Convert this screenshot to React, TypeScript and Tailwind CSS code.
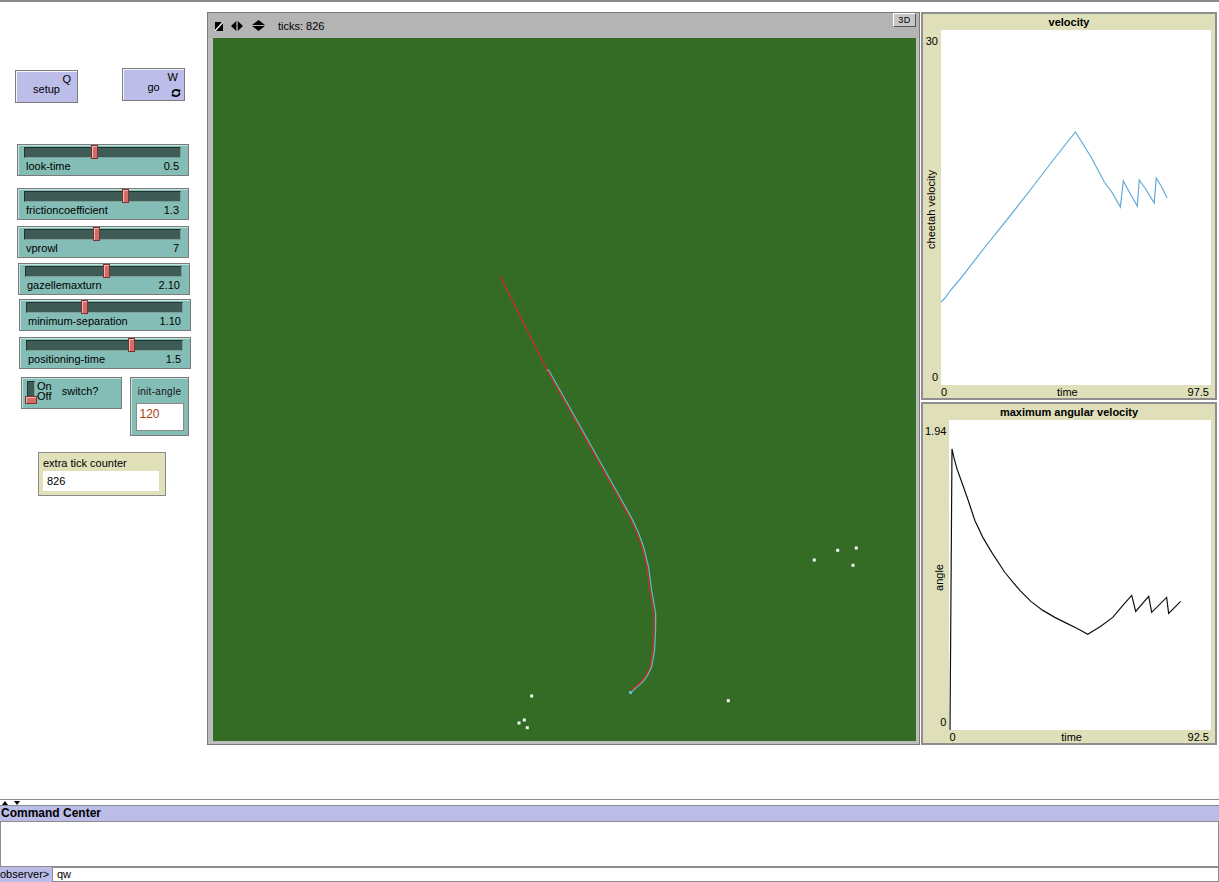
import React from "react";

type SliderDef = {
  name: string;
  value: string;
  thumb: number;
  className: string;
};

const sliders: SliderDef[] = [
  { name: "look-time", value: "0.5", thumb: 66, className: "ml-[17px] mt-[41px]" },
  { name: "frictioncoefficient", value: "1.3", thumb: 97, className: "ml-[17px] mt-[12px]" },
  { name: "vprowl", value: "7", thumb: 68, className: "ml-[17px] mt-[6px]" },
  { name: "gazellemaxturn", value: "2.10", thumb: 77, className: "ml-[18px] mt-[5px]" },
  { name: "minimum-separation", value: "1.10", thumb: 54, className: "ml-[19px] mt-[4px]" },
  { name: "positioning-time", value: "1.5", thumb: 101, className: "ml-[19px] mt-[6px]" },
];

// trail of the cheetah (red) and the gazelle (cyan), in world pixels
const trail: [number, number][] = [
  [334, 332], [384, 421], [407, 462], [417, 480], [424, 495], [429, 509], [434, 529],
  [437, 552], [441, 575], [441, 592], [440, 612], [437, 629], [432, 639], [427, 645],
  [421, 650], [417, 654],
];

const gazelles: [number, number][] = [
  [318.7, 658], [311.3, 682], [306, 685], [314.3, 689.7], [515.3, 662.7],
  [601.3, 522], [624.7, 512.3], [643.3, 510], [640, 527.3],
];

const velocityPts = "0,272 4,268 9,261 20,248 45,216 70,185 95,153 115,127 135,102 150,126 164,152 172,163 180,177 183,151 189,162 197,176 199,150 206,160 214,173 216,148 221,156 227,168";
const anglePts = "1,313 3,29 5,38 8,49 13,63 19,80 26,101 34,118 43,133 56,153 71,171 82,182 94,191 106,198 118,204 128,209 139,215 152,207 164,198 175,185 183,176 187,192 200,177 203,193 218,178 220,194 232,182";

function NlButton({ label, hotkey, forever, className }: { label: string; hotkey: string; forever?: boolean; className: string }) {
  return (
    <div className={`relative flex h-[33px] w-[63px] items-center justify-center border border-[#7c7c7c] bg-[#bdbde9] text-[11px] leading-[13px] shadow-[inset_1px_1px_0_#f4f4ff] ${forever ? "pt-[6px]" : "pt-[5px]"} ${className}`}>
      <span>{label}</span>
      <span className="absolute right-[6px] top-[2px]">{hotkey}</span>
      {forever && (
        <svg className="absolute bottom-[3px] right-[3px]" width="10" height="8" viewBox="0 0 10 8">
          <path d="M1.6 4 A3.2 3 0 0 1 7.6 2.4" stroke="#000" strokeWidth="1.7" fill="none" />
          <path d="M6 0.4 L9.6 0.8 L8.6 4 Z" fill="#000" />
          <path d="M8.4 4 A3.2 3 0 0 1 2.4 5.6" stroke="#000" strokeWidth="1.7" fill="none" />
          <path d="M4 7.6 L0.4 7.2 L1.4 4 Z" fill="#000" />
        </svg>
      )}
    </div>
  );
}

function Slider({ name, value, thumb, className }: SliderDef) {
  return (
    <div className={`flex h-[32px] w-[172px] flex-col border border-[#7a7a7a] bg-[#84bdb5] pl-[6px] pr-[7px] pt-[2px] shadow-[inset_1px_1px_0_#bfe3dd] ${className}`}>
      <div className="relative h-[11px] border border-b-[#7fa19b] border-l-[#22332f] border-r-[#7fa19b] border-t-[#22332f] bg-[#3f5b56]">
        <div
          className="absolute top-[-3px] h-[14px] w-[7px] border border-[#7a3232] bg-[#d26d69] shadow-[inset_1px_1px_0_#f3b5b0]"
          style={{ left: thumb }}
        />
      </div>
      <div className="mt-[2px] flex justify-between px-[2px] text-[11px] leading-[13px]">
        <span>{name}</span>
        <span>{value}</span>
      </div>
    </div>
  );
}

function LeftPanel() {
  return (
    <div className="flex w-[207px] shrink-0 flex-col items-start">
      <div className="flex items-start pl-[15px] pt-[66px]">
        <NlButton label="setup" hotkey="Q" className="mt-[2px]" />
        <NlButton label="go" hotkey="W" forever className="ml-[44px]" />
      </div>
      {sliders.map((s) => (
        <Slider key={s.name} {...s} />
      ))}
      <div className="ml-[21px] mt-[8px] flex items-start">
        <div className="flex h-[32px] w-[101px] items-start border border-[#7a7a7a] bg-[#84bdb5] pl-[5px] pt-[3px] shadow-[inset_1px_1px_0_#bfe3dd]">
          <div className="relative h-[22px] w-[8px] border border-b-[#7fa19b] border-l-[#22332f] border-r-[#7fa19b] border-t-[#22332f] bg-[#3f5b56]">
            <div className="absolute bottom-[-2px] left-[-3px] h-[8px] w-[12px] border border-[#7a3232] bg-[#d26d69] shadow-[inset_1px_1px_0_#f3b5b0]" />
          </div>
          <div className="ml-[2px] flex flex-col text-[11px] leading-[10px]">
            <span>On</span>
            <span>Off</span>
          </div>
          <span className="ml-[10px] mt-[4px] text-[11px] leading-[13px]">switch?</span>
        </div>
        <div className="ml-[8px] flex h-[59px] w-[59px] flex-col items-center border border-[#7a7a7a] bg-[#84bdb5] pt-[8px] shadow-[inset_1px_1px_0_#bfe3dd]">
          <span className="text-[10px] leading-[12px] tracking-[0.3px] text-[#111]">init-angle</span>
          <div className="mt-[5px] h-[28px] w-[48px] border border-[#8a8a8a] bg-white pl-[3px] pt-[3px] text-[12px] leading-[14px] text-[#a5420e]">120</div>
        </div>
      </div>
      <div className="ml-[38px] mt-[16px] flex h-[44px] w-[128px] flex-col border border-[#8a8a8a] bg-[#e0e0b9] px-[4px] pt-[4px]">
        <span className="text-[11px] leading-[13px]">extra tick counter</span>
        <div className="mt-[1px] h-[20px] w-[116px] bg-white pl-[4px] text-[11px] leading-[20px]">826</div>
      </div>
    </div>
  );
}

function ViewFrame() {
  return (
    <div className="mt-[10px] flex h-[733px] w-[713px] shrink-0 flex-col border border-[#7a7a7a] bg-[#bdbdbd]">
      <div className="flex h-[25px] items-center bg-[#b4b4b4] pl-[7px] pr-[3px]">
        <svg width="8" height="9" viewBox="0 0 8 9" className="mt-[1px]">
          <rect width="8" height="9" fill="#000" />
          <path d="M0 9 L8 0" stroke="#fff" strokeWidth="1.4" />
        </svg>
        <svg width="12" height="10" viewBox="0 0 12 10" className="ml-[8px]">
          <path d="M0 5 L5.3 0 L5.3 10 Z" fill="#000" />
          <path d="M6.7 0 L12 5 L6.7 10 Z" fill="#000" />
        </svg>
        <svg width="13" height="11" viewBox="0 0 13 11" className="ml-[9px]">
          <path d="M0 5 L6.5 0 L13 5 Z" fill="#000" />
          <path d="M0 6 L13 6 L6.5 11 Z" fill="#000" />
        </svg>
        <span className="ml-[13px] mt-[2px] text-[11px] leading-[13px]">ticks: 826</span>
        <div className="ml-auto flex h-[14px] w-[23px] items-center justify-center self-start border border-b-[#555] border-l-[#fff] border-r-[#555] border-t-[#fff] bg-[#c6c6c6] text-[9px] leading-[10px] tracking-[0.5px]">
          3D
        </div>
      </div>
      <div className="pb-[3px] pl-[5px] pr-[3px]">
        <div className="h-[703px] w-[703px] bg-[#356c25]">
          <svg width="703" height="703" viewBox="0 0 703 703" className="block">
            <polyline
              points={"333,332 336,332 " + trail.map(([x, y]) => `${x + 1.6},${y}`).join(" ")}
              fill="none"
              stroke="#4fc1c9"
              strokeWidth="1.3"
            />
            <polyline
              points={"287,238 " + trail.map(([x, y]) => `${x},${y}`).join(" ")}
              fill="none"
              stroke="#e2241d"
              strokeWidth="1.2"
            />
            <rect x="416" y="653" width="3" height="3" fill="#4fc1c9" />
            {gazelles.map(([x, y], i) => (
              <rect key={i} x={x - 1.5} y={y - 1.5} width="3" height="3" fill="#f4f4f4" />
            ))}
          </svg>
        </div>
      </div>
    </div>
  );
}

function Plot({
  title,
  yMax,
  xMax,
  yLabel,
  className,
  children,
}: {
  title: string;
  yMax: string;
  xMax: string;
  yLabel: string;
  className: string;
  children: React.ReactNode;
}) {
  return (
    <div className={`grid grid-cols-[auto_1fr_4px] grid-rows-[16px_1fr_13px] border-2 border-[#8e8e8e] bg-[#dfdfb9] text-[11px] leading-[13px] ${className}`}>
      <div className="col-span-3 text-center font-bold leading-[16px]">{title}</div>
      <div className="flex flex-col items-end justify-between pb-[1px] pl-[2px] pr-[3px] pt-[5px]">
        <span>{yMax}</span>
        <span className="rotate-180 [writing-mode:vertical-rl]">{yLabel}</span>
        <span>0</span>
      </div>
      <div className="min-h-0 bg-white">{children}</div>
      <div />
      <div />
      <div className="flex pr-[2px] pt-[1px]">
        <span>0</span>
        <span className="flex-1 text-center">time</span>
        <span>{xMax}</span>
      </div>
      <div />
    </div>
  );
}

function CommandCenter() {
  return (
    <div className="flex flex-1 flex-col">
      <div className="flex h-[6px] items-center gap-[6px] border-t border-[#8c8c8c] pl-[2px]">
        <svg width="6" height="4" viewBox="0 0 6 4">
          <path d="M0 4 L3 0 L6 4 Z" fill="#000" />
        </svg>
        <svg width="6" height="4" viewBox="0 0 6 4">
          <path d="M0 0 L6 0 L3 4 Z" fill="#000" />
        </svg>
      </div>
      <div className="h-[17px] border-b border-t border-[#8c8c8c] bg-[#bcbce8] pl-[1px] text-[12px] font-bold leading-[15px]">
        Command Center
      </div>
      <div className="h-[45px] border-b border-l border-r border-[#8c8c8c] bg-white" />
      <div className="flex h-[15px]">
        <div className="w-[52px] bg-[#bcbce8] text-[11px] leading-[15px]">observer&gt;</div>
        <div className="flex-1 border border-[#8c8c8c] bg-white pl-[4px] text-[11px] leading-[13px]">qw</div>
      </div>
    </div>
  );
}

export default function App() {
  return (
    <div className="flex h-[882px] w-[1219px] flex-col overflow-hidden bg-white font-['Liberation_Sans',Arial,sans-serif] text-black">
      <div className="h-[2px] shrink-0 bg-[#8a8a8a]" />
      <div className="flex h-[797px] shrink-0">
        <LeftPanel />
        <ViewFrame />
        <div className="ml-[1px] mt-[10px] flex w-[296px] flex-col gap-[2px]">
          <Plot title="velocity" yMax="30" xMax="97.5" yLabel="cheetah velocity" className="h-[388px]">
            <svg viewBox="0 0 271 355" preserveAspectRatio="none" className="block h-full w-full">
              <polyline points={velocityPts} fill="none" stroke="#62abd8" strokeWidth="1.2" />
            </svg>
          </Plot>
          <Plot title="maximum angular velocity" yMax="1.94" xMax="92.5" yLabel="angle" className="h-[343px]">
            <svg viewBox="0 0 262 311" preserveAspectRatio="none" className="block h-full w-full">
              <polyline points={anglePts} fill="none" stroke="#111" strokeWidth="1.2" />
            </svg>
          </Plot>
        </div>
      </div>
      <CommandCenter />
    </div>
  );
}
